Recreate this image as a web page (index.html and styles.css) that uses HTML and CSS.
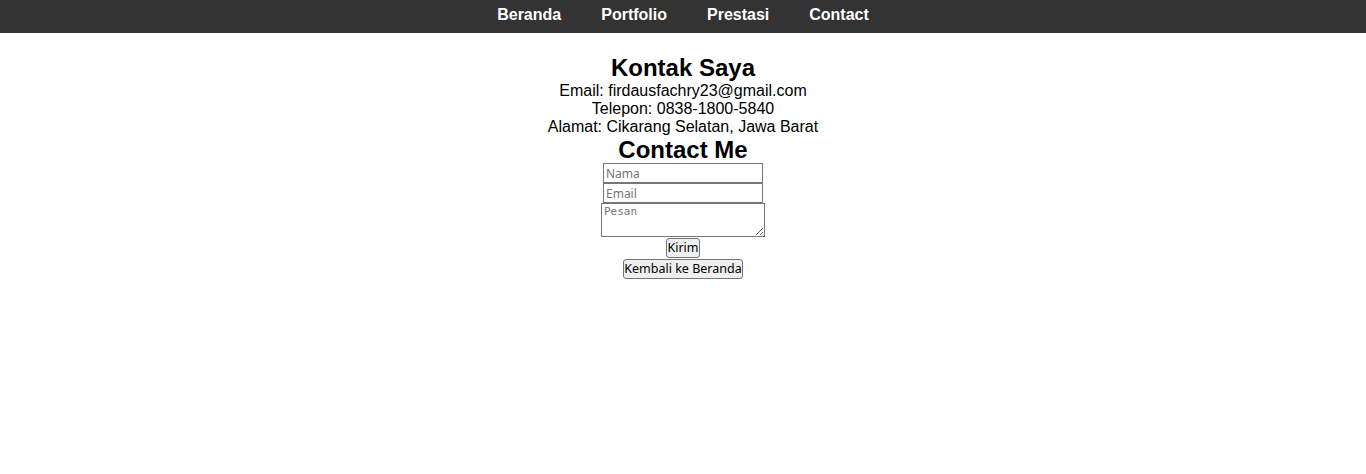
FILE: index.html
```html
<!DOCTYPE html>
<html lang="id">
<head>
<meta charset="utf-8">
<title>Contact</title>
<link rel="stylesheet" href="styles.css">
</head>
<body>
<nav class="topnav">
  <a class="navlink" href="#">Beranda</a>
  <a class="navlink" href="#">Portfolio</a>
  <a class="navlink" href="#">Prestasi</a>
  <a class="navlink" href="#">Contact</a>
</nav>
<section class="contact">
  <h2 class="title">Kontak Saya</h2>
  <p class="line">Email: firdausfachry23@gmail.com</p>
  <p class="line">Telepon: 0838-1800-5840</p>
  <p class="line">Alamat: Cikarang Selatan, Jawa Barat</p>
  <h2 class="title title-last">Contact Me</h2>
  <form class="form">
    <input class="field" type="text" placeholder="Nama">
    <input class="field" type="email" placeholder="Email">
    <textarea class="area" placeholder="Pesan"></textarea>
    <button class="btn" type="button">Kirim</button>
  </form>
  <button class="btn" type="button">Kembali ke Beranda</button>
</section>
</body>
</html>
```
FILE: styles.css
```css
html, body {
  margin: 0;
  padding: 0;
  background: #fff;
}
body {
  font-family: "Liberation Sans", Arial, sans-serif;
  color: #000;
}
.topnav {
  background: #333333;
  height: 33px;
  display: flex;
  justify-content: center;
  align-items: flex-start;
  gap: 40px;
  padding-top: 6px;
  box-sizing: border-box;
}
.navlink {
  color: #fff;
  text-decoration: none;
  font-weight: bold;
  font-size: 16px;
  line-height: 18px;
}
.contact {
  display: flex;
  flex-direction: column;
  align-items: center;
  padding-top: 21px;
}
.title {
  margin: 0;
  font-size: 24px;
  line-height: 28px;
  font-weight: bold;
}
.title-last {
  line-height: 27px;
}
.line {
  margin: 0;
  font-size: 16px;
  line-height: 18px;
}
.form {
  display: flex;
  flex-direction: column;
  align-items: center;
}
.field {
  display: block;
  box-sizing: border-box;
  width: 160px;
  height: 20px;
  margin: 0;
  padding: 0 2px;
  border: 1px solid #767676;
  font-family: "Noto Sans", sans-serif;
  font-size: 12px;
  color: #000;
}
.field::placeholder, .area::placeholder {
  color: #757575;
}
.area {
  display: block;
  box-sizing: border-box;
  width: 164px;
  height: 34px;
  margin: 0;
  padding: 1px 2px;
  border: 1px solid #767676;
  font-family: "DejaVu Sans Mono", monospace;
  font-size: 11px;
  line-height: 13px;
}
.btn {
  margin: 1px 0 0;
  padding: 0;
  height: 20px;
  border: 1px solid #767676;
  border-radius: 3px;
  background: #efefef;
  font-family: "Noto Sans", sans-serif;
  font-size: 12.5px;
  line-height: 16px;
  color: #000;
}
```
